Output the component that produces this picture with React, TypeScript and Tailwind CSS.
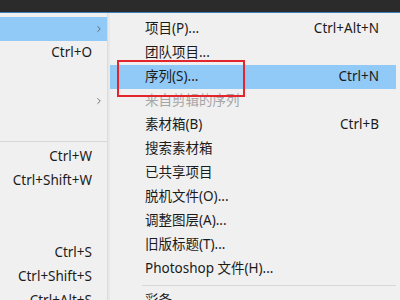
import { ChevronRight } from "lucide-react";

const font = { fontFamily: '"Noto Sans", "Noto Sans CJK SC", sans-serif' };

type Row = { label?: string; key?: string; sub?: boolean; active?: boolean; off?: boolean; sep?: boolean };

const left: Row[] = [
  { sub: true, active: true },
  { key: "Ctrl+O" },
  {},
  { sub: true },
  {},
  { sep: true },
  { key: "Ctrl+W" },
  { key: "Ctrl+Shift+W" },
  {},
  {},
  { key: "Ctrl+S" },
  { key: "Ctrl+Shift+S" },
  { key: "Ctrl+Alt+S" },
];

const right: Row[] = [
  { label: "项目(P)...", key: "Ctrl+Alt+N" },
  { label: "团队项目..." },
  { label: "序列(S)...", key: "Ctrl+N", active: true },
  { label: "来自剪辑的序列", off: true },
  { label: "素材箱(B)", key: "Ctrl+B" },
  { label: "搜索素材箱" },
  { label: "已共享项目" },
  { label: "脱机文件(O)..." },
  { label: "调整图层(A)..." },
  { label: "旧版标题(T)..." },
  { label: "Photoshop 文件(H)..." },
  { sep: true },
  { label: "彩条..." },
];

export default function App() {
  return (
    <div className="w-[400px] h-[300px] overflow-hidden bg-[#f0f0f0] flex flex-col relative text-[13.5px] text-[#1b1b1b]" style={font}>
      <div className="h-[12px] bg-[#2b2b2b] shrink-0" />
      <div className="h-[1px] bg-[#3d7fb8] shrink-0" />
      <div className="flex flex-1">
        {/* main menu */}
        <div className="w-[108px] shrink-0 pt-[4px] border-r border-[#dcdcdc] bg-[#f0f0f0]">
          {left.map((r, i) =>
            r.sep ? (
              <div key={i} className="h-[8px] flex items-center">
                <div className="h-[1px] w-full bg-[#d7d7d7]" />
              </div>
            ) : (
              <div key={i} className={`h-[24px] flex items-center justify-end pr-[15px] relative ${r.active ? "bg-[#91c9f7]" : ""}`}>
                {r.key && <span className="leading-none">{r.key}</span>}
                {r.sub && <ChevronRight size={10} strokeWidth={2} className="absolute right-[3px] text-[#555]" />}
              </div>
            )
          )}
        </div>
        <div className="w-[2px] bg-[#e8e8e8] shrink-0" />
        {/* submenu */}
        <div className="flex-1 pt-[4px] pr-[4px]">
          {right.map((r, i) =>
            r.sep ? (
              <div key={i} className="h-[8px] flex items-center pl-[32px]">
                <div className="h-[1px] w-full bg-[#d7d7d7]" />
              </div>
            ) : (
              <div key={i} className={`h-[24px] flex items-center justify-between pl-[35px] pr-[17px] ${r.active ? "bg-[#91c9f7]" : ""}`}>
                <span className={`leading-none ${r.off ? "text-[#a5a5a5]" : ""}`}>{r.label}</span>
                {r.key && <span className="leading-none">{r.key}</span>}
              </div>
            )
          )}
        </div>
      </div>
      <div className="absolute left-[117px] top-[60px] w-[128px] h-[37px] border-2 border-[#e3262c]" />
    </div>
  );
}
